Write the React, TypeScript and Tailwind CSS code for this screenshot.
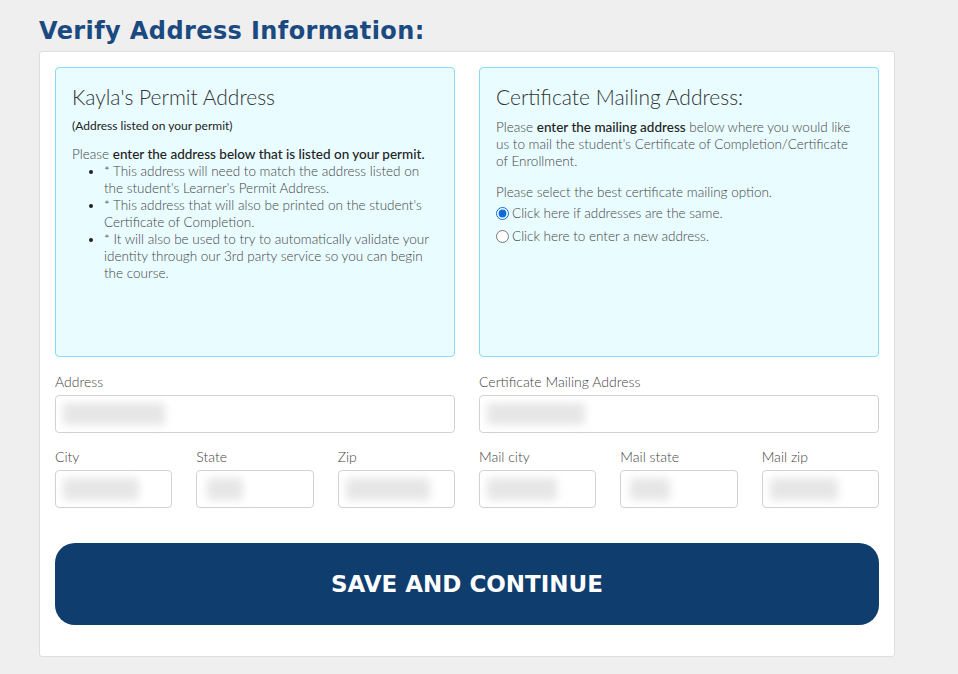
import React from 'react'

const Blur = ({ w, ml = 'ml-[7px]' }: { w: string; ml?: string }) => (
  <div className={`${w} ${ml} h-[22px] rounded bg-[#e6e6e6] blur-[4px]`} />
)

const Field = ({ label, blur, ml }: { label: string; blur: string; ml?: string }) => (
  <div className="flex flex-col">
    <label className="text-[14px] leading-[15px] font-light text-[#444]">{label}</label>
    <div className="mt-[6px] h-[38px] rounded border border-[#cfd3d8] bg-white flex items-center">
      <Blur w={blur} ml={ml} />
    </div>
  </div>
)

const App = () => {
  return (
    <div
      className="min-h-screen bg-[#efefef] pl-[39px] pt-[16px] pb-[18px]"
      style={{ fontFamily: 'Lato, "Open Sans", sans-serif' }}
    >
      <h1
        className="text-[24px] leading-[30px] font-bold text-[#1a4a80] tracking-[0.4px]"
        style={{ fontFamily: '"DejaVu Sans", sans-serif' }}
      >
        Verify Address Information:
      </h1>

      <div className="mt-[5px] w-[856px] rounded-[3px] border border-[#dedede] bg-white px-[15px] pt-[15px] pb-[31px]">
        <div className="grid grid-cols-2 gap-6">
          <div className="h-[290px] rounded border border-[#88dcf5] bg-[#e9fcff] px-[16px] pt-[16px] text-[#444]">
            <h2 className="text-[21px] leading-[26px] font-light text-[#333]">Kayla's Permit Address</h2>
            <p className="mt-[9px] text-[12px] leading-[14px] text-[#222]">(Address listed on your permit)</p>
            <p className="mt-[13px] text-[13.5px] leading-[17px] font-light">
              Please <span className="font-medium text-[#222]">enter the address below that is listed on your permit.</span>
            </p>
            <ul className="list-disc pl-[32px] text-[13.5px] leading-[17px] font-light marker:text-[#222]">
              <li>* This address will need to match the address listed on the student's Learner's Permit Address.</li>
              <li>* This address that will also be printed on the student's Certificate of Completion.</li>
              <li>* It will also be used to try to automatically validate your identity through our 3rd party service so you can begin the course.</li>
            </ul>
          </div>

          <div className="h-[290px] rounded border border-[#88dcf5] bg-[#e9fcff] px-[16px] pt-[16px] text-[#444]">
            <h2 className="text-[21px] leading-[26px] font-light text-[#333]">Certificate Mailing Address:</h2>
            <p className="mt-[9px] text-[13.5px] leading-[17px] font-light">
              Please <span className="font-medium text-[#222]">enter the mailing address</span> below where you would like us to mail the student's Certificate of Completion/Certificate of Enrollment.
            </p>
            <p className="mt-[14px] text-[13.5px] leading-[17px] font-light">Please select the best certificate mailing option.</p>
            <label className="mt-[3px] flex items-center text-[13.5px] leading-[19px] font-light">
              <input type="radio" name="mail" defaultChecked className="ml-0 mr-[3px] h-[13px] w-[13px] accent-[#0a6cdc]" />
              Click here if addresses are the same.
            </label>
            <label className="mt-[4px] flex items-center text-[13.5px] leading-[19px] font-light">
              <input type="radio" name="mail" className="ml-0 mr-[3px] h-[13px] w-[13px]" />
              Click here to enter a new address.
            </label>
          </div>
        </div>

        <div className="mt-[17px] grid grid-cols-2 gap-6">
          <div className="flex flex-col">
            <Field label="Address" blur="w-[102px]" />
            <div className="mt-[16px] grid grid-cols-3 gap-6">
              <Field label="City" blur="w-[76px]" />
              <Field label="State" blur="w-[36px]" ml="ml-[10px]" />
              <Field label="Zip" blur="w-[84px]" />
            </div>
          </div>
          <div className="flex flex-col">
            <Field label="Certificate Mailing Address" blur="w-[98px]" />
            <div className="mt-[16px] grid grid-cols-3 gap-6">
              <Field label="Mail city" blur="w-[70px]" />
              <Field label="Mail state" blur="w-[40px]" ml="ml-[9px]" />
              <Field label="Mail zip" blur="w-[68px]" />
            </div>
          </div>
        </div>

        <button
          className="mt-[35px] flex h-[82px] w-full items-center justify-center rounded-[20px] bg-[#0f3d6e] text-[23px] font-bold text-white"
          style={{ fontFamily: '"DejaVu Sans", sans-serif' }}
        >
          SAVE AND CONTINUE
        </button>
      </div>
    </div>
  )
}

export default App
